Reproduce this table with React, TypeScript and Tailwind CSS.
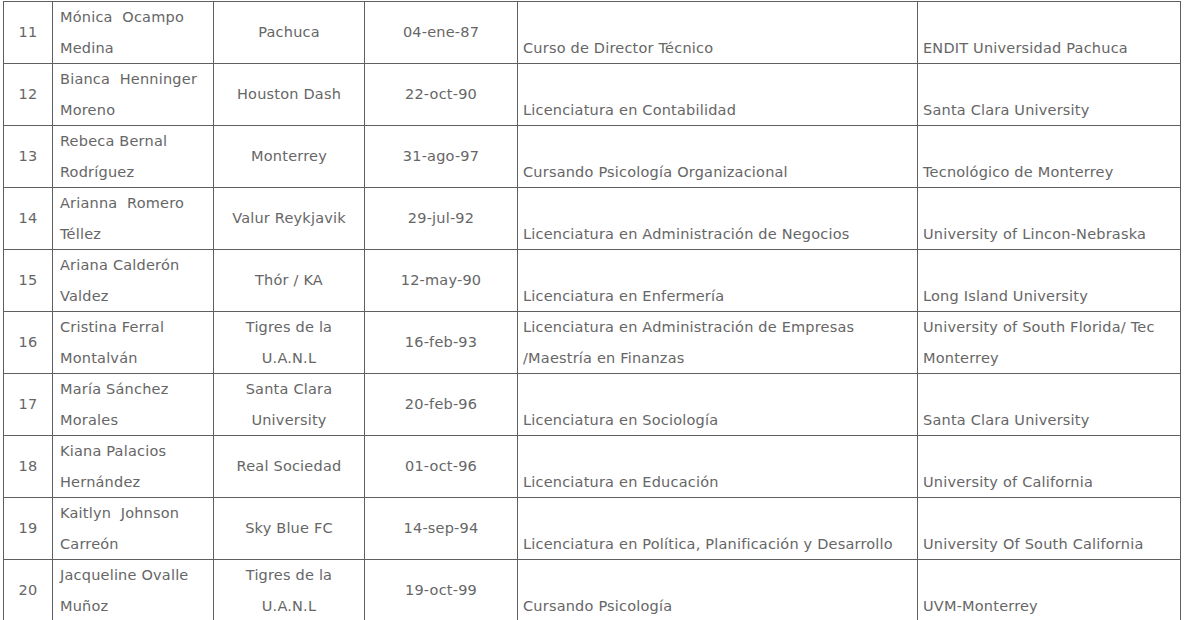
const rows = [
  {
    n: "11",
    name: ["Mónica  Ocampo", "Medina"],
    team: ["Pachuca"],
    born: "04-ene-87",
    study: ["Curso de Director Técnico"],
    school: ["ENDIT Universidad Pachuca"],
  },
  {
    n: "12",
    name: ["Bianca  Henninger", "Moreno"],
    team: ["Houston Dash"],
    born: "22-oct-90",
    study: ["Licenciatura en Contabilidad"],
    school: ["Santa Clara University"],
  },
  {
    n: "13",
    name: ["Rebeca Bernal", "Rodríguez"],
    team: ["Monterrey"],
    born: "31-ago-97",
    study: ["Cursando Psicología Organizacional"],
    school: ["Tecnológico de Monterrey"],
  },
  {
    n: "14",
    name: ["Arianna  Romero", "Téllez"],
    team: ["Valur Reykjavik"],
    born: "29-jul-92",
    study: ["Licenciatura en Administración de Negocios"],
    school: ["University of Lincon-Nebraska"],
  },
  {
    n: "15",
    name: ["Ariana Calderón", "Valdez"],
    team: ["Thór / KA"],
    born: "12-may-90",
    study: ["Licenciatura en Enfermería"],
    school: ["Long Island University"],
  },
  {
    n: "16",
    name: ["Cristina Ferral", "Montalván"],
    team: ["Tigres de la", "U.A.N.L"],
    born: "16-feb-93",
    study: ["Licenciatura en Administración de Empresas", "/Maestría en Finanzas"],
    school: ["University of South Florida/ Tec", "Monterrey"],
  },
  {
    n: "17",
    name: ["María Sánchez", "Morales"],
    team: ["Santa Clara", "University"],
    born: "20-feb-96",
    study: ["Licenciatura en Sociología"],
    school: ["Santa Clara University"],
  },
  {
    n: "18",
    name: ["Kiana Palacios", "Hernández"],
    team: ["Real Sociedad"],
    born: "01-oct-96",
    study: ["Licenciatura en Educación"],
    school: ["University of California"],
  },
  {
    n: "19",
    name: ["Kaitlyn  Johnson", "Carreón"],
    team: ["Sky Blue FC"],
    born: "14-sep-94",
    study: ["Licenciatura en Política, Planificación y Desarrollo"],
    school: ["University Of South California"],
  },
  {
    n: "20",
    name: ["Jacqueline Ovalle", "Muñoz"],
    team: ["Tigres de la", "U.A.N.L"],
    born: "19-oct-99",
    study: ["Cursando Psicología"],
    school: ["UVM-Monterrey"],
  },
];

const cell = "border-[1.5px] border-[#5f5f5f] p-0";

function Lines({ lines }: { lines: string[] }) {
  return (
    <>
      {lines.map((l) => (
        <div key={l} className="whitespace-pre">
          {l}
        </div>
      ))}
    </>
  );
}

export default function App() {
  return (
    <div className="w-[1184px] h-[620px] bg-white overflow-hidden pt-px pl-[3px]">
      <table
        className="table-fixed border-collapse text-[14.5px] tracking-[0.2px] leading-[30.5px] text-[#666666]"
        style={{ fontFamily: '"DejaVu Sans", Verdana, sans-serif' }}
      >
        <colgroup>
          <col className="w-[49px]" />
          <col className="w-[161px]" />
          <col className="w-[151px]" />
          <col className="w-[153px]" />
          <col className="w-[400px]" />
          <col className="w-[263px]" />
        </colgroup>
        <tbody>
          {rows.map((r) => (
            <tr key={r.n} className="h-[62px]">
              <td className={`${cell} text-center align-middle`}>{r.n}</td>
              <td className={`${cell} pl-[7px] pr-1 align-middle`}>
                <Lines lines={r.name} />
              </td>
              <td className={`${cell} text-center align-middle`}>
                <Lines lines={r.team} />
              </td>
              <td className={`${cell} text-center align-middle`}>{r.born}</td>
              <td className={`${cell} px-[5px] align-bottom`}>
                <Lines lines={r.study} />
              </td>
              <td className={`${cell} px-[5px] align-bottom`}>
                <Lines lines={r.school} />
              </td>
            </tr>
          ))}
        </tbody>
      </table>
    </div>
  );
}
